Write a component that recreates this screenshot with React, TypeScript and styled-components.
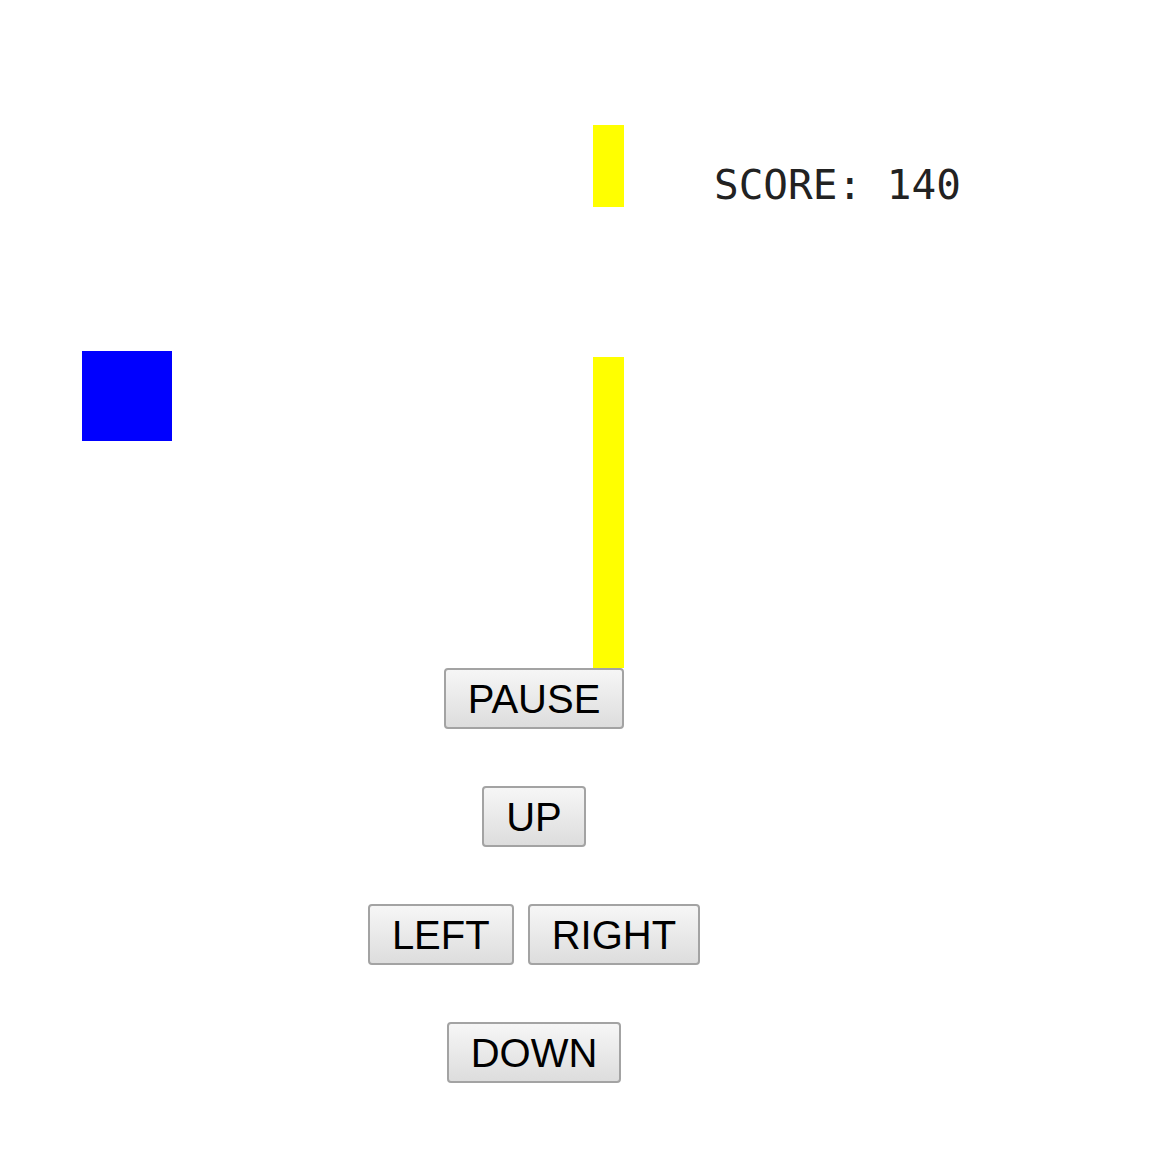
import React from "react";
import styled, { createGlobalStyle } from "styled-components";

const Global = createGlobalStyle`
  html, body { margin: 0; padding: 0; background: #ffffff; }
  body { font-family: "Liberation Sans", Arial, sans-serif; }
`;

const Page = styled.div`
  width: 1157px;
  display: flex;
  flex-direction: column;
`;

const Board = styled.div`
  position: relative;
  width: 1157px;
  height: 668px;
`;

const Bird = styled.div`
  position: absolute;
  background: #0000ff;
`;

const Pipe = styled.div`
  position: absolute;
  background: #ffff00;
`;

const Score = styled.div`
  position: absolute;
  font-family: "DejaVu Sans Mono", "Liberation Mono", monospace;
  font-size: 41px;
  line-height: 41px;
  color: #222;
  white-space: pre;
`;

const Controls = styled.div`
  width: 1068px;
  display: flex;
  flex-direction: column;
  align-items: center;
  gap: 57px;
`;

const Row = styled.div`
  display: flex;
  gap: 14px;
`;

const Button = styled.button`
  height: 61px;
  box-sizing: border-box;
  padding: 0 22px;
  margin: 0;
  font-family: "Liberation Sans", Arial, sans-serif;
  font-size: 40px;
  line-height: 1;
  color: #000;
  border: 2px solid #a3a3a3;
  border-radius: 4px;
  background: linear-gradient(#f6f6f6, #dddddd);
  cursor: pointer;
`;

type Rect = { x: number; y: number; w: number; h: number };
const at = (r: Rect) => ({ left: r.x, top: r.y, width: r.w, height: r.h });

export default function App() {
  const bird: Rect = { x: 82, y: 351, w: 90, h: 90 };
  const pipes: Rect[] = [
    { x: 593, y: 125, w: 31, h: 82 },
    { x: 593, y: 357, w: 31, h: 311 },
  ];
  return (
    <Page>
      <Global />
      <Board>
        <Bird style={at(bird)} />
        {pipes.map((p, i) => (
          <Pipe key={i} style={at(p)} />
        ))}
        <Score style={{ left: 714, top: 165 }}>SCORE: 140</Score>
      </Board>
      <Controls>
        <Button>PAUSE</Button>
        <Button>UP</Button>
        <Row>
          <Button>LEFT</Button>
          <Button>RIGHT</Button>
        </Row>
        <Button>DOWN</Button>
      </Controls>
    </Page>
  );
}
